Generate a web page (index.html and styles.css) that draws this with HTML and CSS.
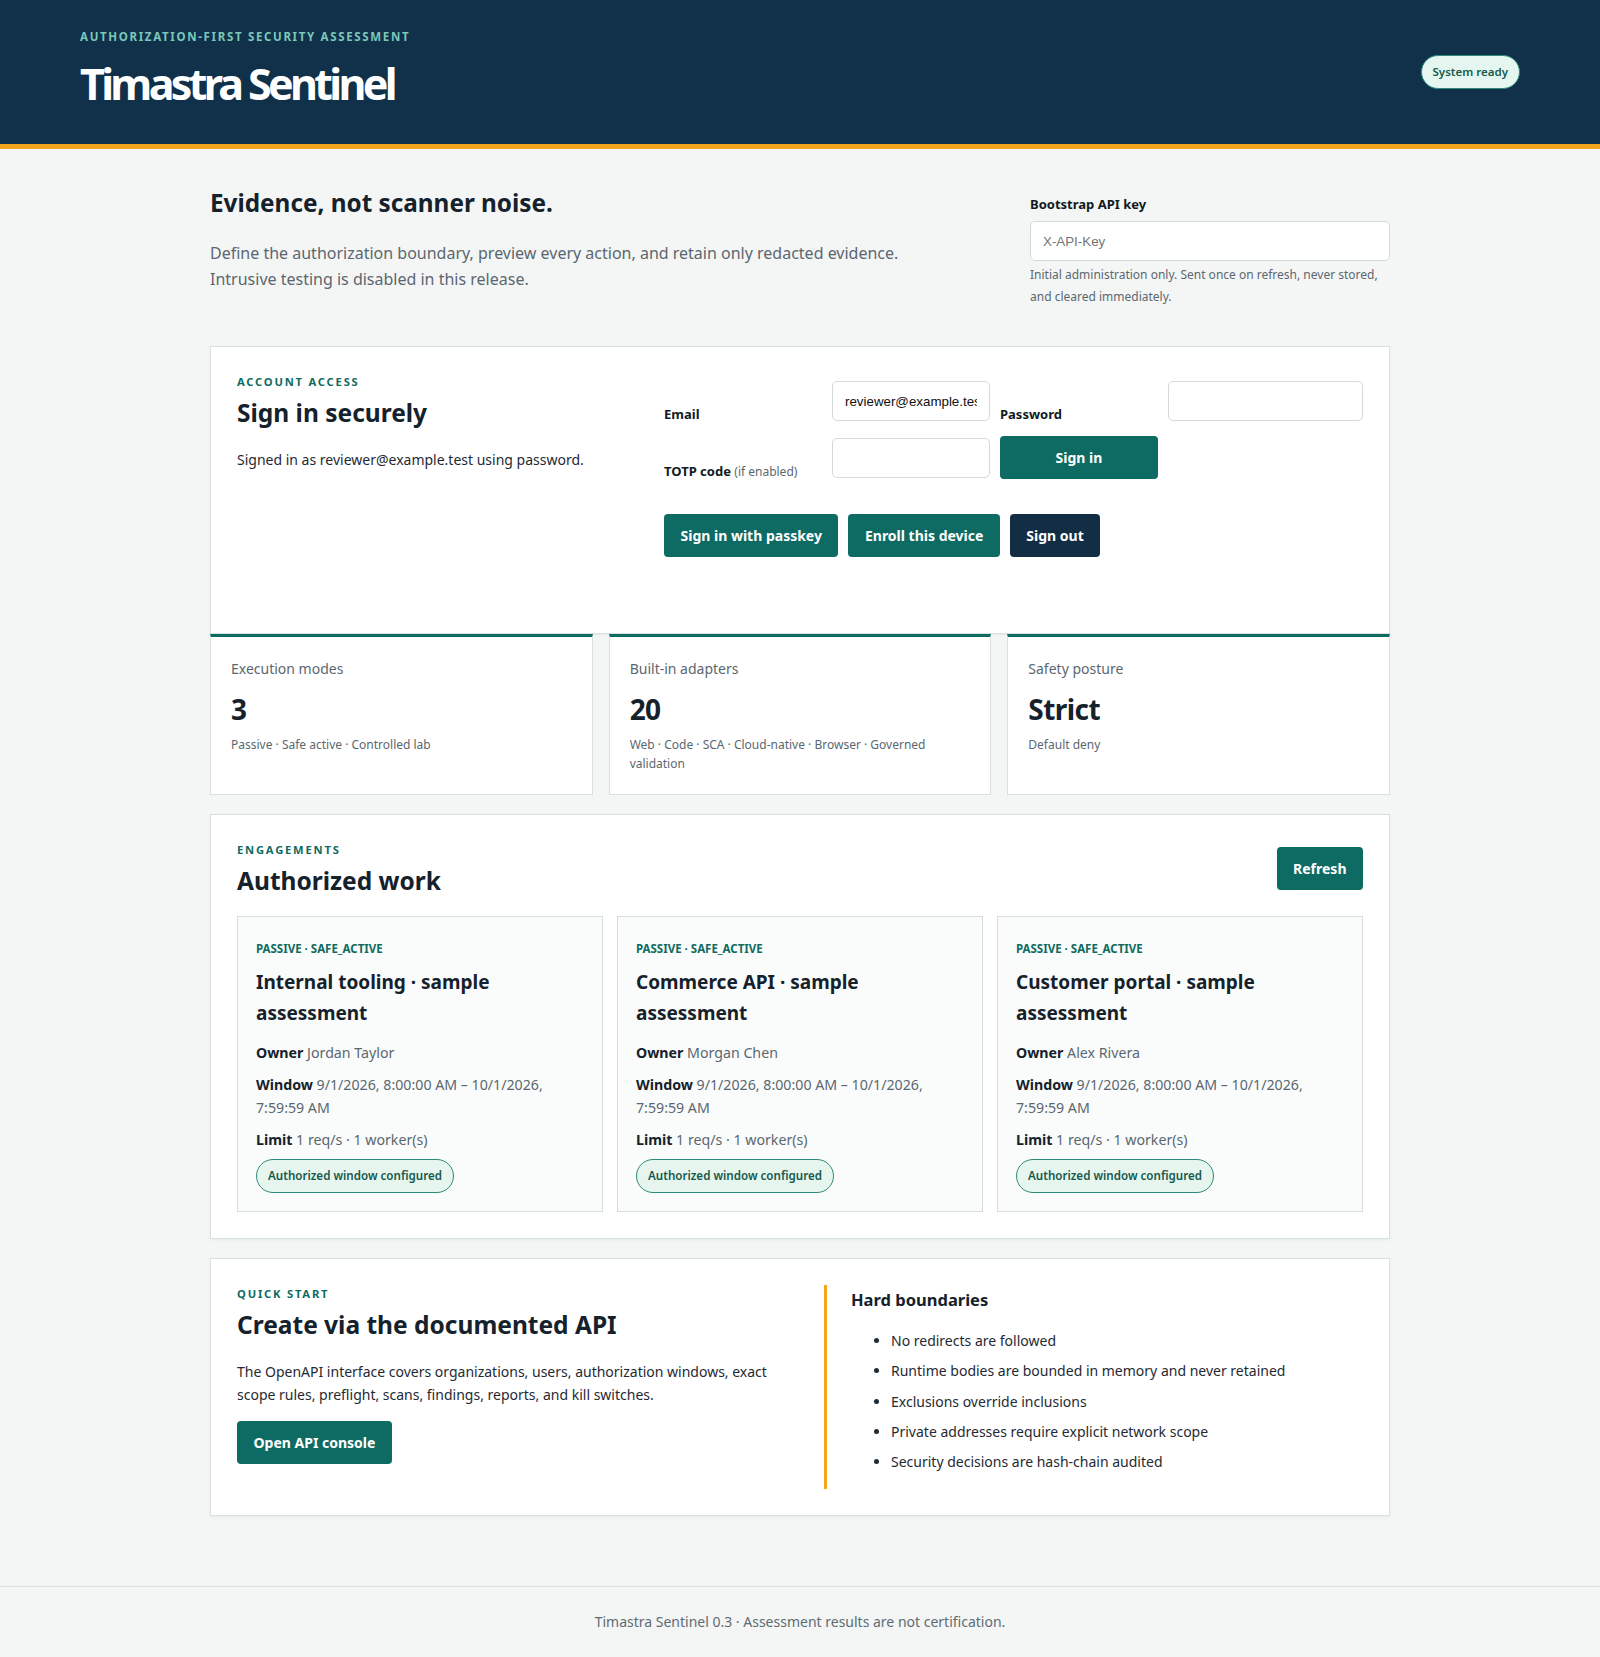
FILE: index.html
```html
<!DOCTYPE html>
<html lang="en">
<head>
<meta charset="utf-8">
<title>Timastra Sentinel</title>
<link rel="stylesheet" href="styles.css">
</head>
<body>
<header class="topbar">
  <div class="brand">
    <p class="brand-eyebrow">Authorization-first security assessment</p>
    <h1 class="brand-title">Timastra Sentinel</h1>
  </div>
  <span class="status-pill">System ready</span>
</header>

<main class="page">
  <section class="hero">
    <div class="hero-copy">
      <h2 class="hero-title">Evidence, not scanner noise.</h2>
      <p class="hero-text">Define the authorization boundary, preview every action, and retain only redacted evidence. Intrusive testing is disabled in this release.</p>
    </div>
    <div class="api-key">
      <label class="field-label" for="apikey">Bootstrap API key</label>
      <input class="text-input" id="apikey" type="text" placeholder="X-API-Key">
      <p class="help-text">Initial administration only. Sent once on refresh, never stored, and cleared immediately.</p>
    </div>
  </section>

  <section class="card account">
    <div class="account-intro">
      <p class="eyebrow">Account access</p>
      <h2 class="section-title">Sign in securely</h2>
      <p class="account-status">Signed in as reviewer@example.test using password.</p>
    </div>
    <div class="account-form">
      <div class="form-grid">
        <label class="form-label" for="email">Email</label>
        <input class="text-input" id="email" type="email" value="reviewer@example.test">
        <label class="form-label" for="password">Password</label>
        <input class="text-input" id="password" type="password">
        <label class="form-label" for="totp">TOTP code <span class="label-hint">(if enabled)</span></label>
        <input class="text-input" id="totp" type="text">
        <button class="btn btn-primary btn-block" type="button">Sign in</button>
      </div>
      <div class="btn-row">
        <button class="btn btn-primary" type="button">Sign in with passkey</button>
        <button class="btn btn-primary" type="button">Enroll this device</button>
        <button class="btn btn-dark" type="button">Sign out</button>
      </div>
    </div>
  </section>

  <section class="stats">
    <div class="stat">
      <p class="stat-label">Execution modes</p>
      <p class="stat-value">3</p>
      <p class="stat-note">Passive · Safe active · Controlled lab</p>
    </div>
    <div class="stat">
      <p class="stat-label">Built-in adapters</p>
      <p class="stat-value">20</p>
      <p class="stat-note">Web · Code · SCA · Cloud-native · Browser · Governed validation</p>
    </div>
    <div class="stat">
      <p class="stat-label">Safety posture</p>
      <p class="stat-value">Strict</p>
      <p class="stat-note">Default deny</p>
    </div>
  </section>

  <section class="card engagements">
    <div class="section-head">
      <div>
        <p class="eyebrow">Engagements</p>
        <h2 class="section-title">Authorized work</h2>
      </div>
      <button class="btn btn-primary" type="button">Refresh</button>
    </div>
    <div class="eng-grid">
      <article class="eng">
        <p class="eng-modes">PASSIVE · SAFE_ACTIVE</p>
        <h3 class="eng-title">Internal tooling · sample assessment</h3>
        <p class="eng-meta"><strong>Owner</strong> Jordan Taylor</p>
        <p class="eng-meta"><strong>Window</strong> 9/1/2026, 8:00:00 AM – 10/1/2026, 7:59:59 AM</p>
        <p class="eng-meta"><strong>Limit</strong> 1 req/s · 1 worker(s)</p>
        <span class="pill">Authorized window configured</span>
      </article>
      <article class="eng">
        <p class="eng-modes">PASSIVE · SAFE_ACTIVE</p>
        <h3 class="eng-title">Commerce API · sample assessment</h3>
        <p class="eng-meta"><strong>Owner</strong> Morgan Chen</p>
        <p class="eng-meta"><strong>Window</strong> 9/1/2026, 8:00:00 AM – 10/1/2026, 7:59:59 AM</p>
        <p class="eng-meta"><strong>Limit</strong> 1 req/s · 1 worker(s)</p>
        <span class="pill">Authorized window configured</span>
      </article>
      <article class="eng">
        <p class="eng-modes">PASSIVE · SAFE_ACTIVE</p>
        <h3 class="eng-title">Customer portal · sample assessment</h3>
        <p class="eng-meta"><strong>Owner</strong> Alex Rivera</p>
        <p class="eng-meta"><strong>Window</strong> 9/1/2026, 8:00:00 AM – 10/1/2026, 7:59:59 AM</p>
        <p class="eng-meta"><strong>Limit</strong> 1 req/s · 1 worker(s)</p>
        <span class="pill">Authorized window configured</span>
      </article>
    </div>
  </section>

  <section class="card quickstart">
    <div class="qs-main">
      <p class="eyebrow">Quick start</p>
      <h2 class="section-title">Create via the documented API</h2>
      <p class="qs-text">The OpenAPI interface covers organizations, users, authorization windows, exact scope rules, preflight, scans, findings, reports, and kill switches.</p>
      <button class="btn btn-primary" type="button">Open API console</button>
    </div>
    <aside class="boundaries">
      <h3 class="boundaries-title">Hard boundaries</h3>
      <ul class="boundaries-list">
        <li>No redirects are followed</li>
        <li>Runtime bodies are bounded in memory and never retained</li>
        <li>Exclusions override inclusions</li>
        <li>Private addresses require explicit network scope</li>
        <li>Security decisions are hash-chain audited</li>
      </ul>
    </aside>
  </section>
</main>

<footer class="footer">Timastra Sentinel 0.3 · Assessment results are not certification.</footer>
</body>
</html>
```
FILE: styles.css
```css
* {
  box-sizing: border-box;
}

body {
  margin: 0;
  font-family: "Noto Sans", "Open Sans", sans-serif;
  background: #f4f6f5;
  color: #1b2630;
}

p, h1, h2, h3 {
  margin: 0;
}

/* Header */
.topbar {
  height: 149px;
  padding: 0 80px;
  background: #11304a;
  border-bottom: 5px solid #f4a51c;
  display: flex;
  align-items: center;
  justify-content: space-between;
}

.brand {
  padding-bottom: 7px;
}

.brand-eyebrow {
  font-size: 11.5px;
  line-height: 16px;
  font-weight: 700;
  letter-spacing: 0.145em;
  text-transform: uppercase;
  color: #7cc8ba;
}

.brand-title {
  margin-top: 15px;
  font-size: 43px;
  line-height: 48px;
  font-weight: 700;
  letter-spacing: -0.085em;
  color: #ffffff;
}

.status-pill {
  display: inline-block;
  padding: 7px 11px;
  line-height: 18px;
  font-size: 11.5px;
  font-weight: 600;
  color: #17594d;
  background: #e4f6ef;
  border: 1px solid #2e8b79;
  border-radius: 999px;
}

/* Page */
.page {
  width: 1180px;
  margin: 0 auto;
  padding: 38px 0 70px;
}

.hero {
  display: grid;
  grid-template-columns: 1fr 360px;
  column-gap: 40px;
  margin-bottom: 38px;
}

.hero-title {
  font-size: 24.3px;
  line-height: 31px;
  font-weight: 700;
  color: #15212b;
}

.hero-text {
  margin-top: 22px;
  max-width: 710px;
  font-size: 16px;
  line-height: 26px;
  color: #5b6770;
}

.api-key {
  padding-top: 8px;
  display: flex;
  flex-direction: column;
}

.field-label {
  font-size: 13px;
  line-height: 18px;
  font-weight: 700;
  color: #111a22;
}

.text-input {
  width: 100%;
  height: 40px;
  padding: 0 12px;
  border: 1px solid #d3dbda;
  border-radius: 5px;
  background: #ffffff;
  font-family: "Liberation Sans", Arial, sans-serif;
  font-size: 13.33px;
  color: #111111;
}

.text-input::placeholder {
  color: #757575;
}

.api-key .text-input {
  margin-top: 8px;
}

.help-text {
  margin-top: 3px;
  font-size: 12px;
  line-height: 22px;
  color: #5b6770;
}

/* Cards */
.card {
  background: #ffffff;
  border: 1px solid #d9e1df;
  padding: 26px;
  box-shadow: 0 1px 3px rgba(17, 48, 74, 0.05);
}

.eyebrow {
  font-size: 11.2px;
  line-height: 18px;
  font-weight: 700;
  letter-spacing: 0.16em;
  text-transform: uppercase;
  color: #0f6b5f;
}

.section-title {
  margin-top: 6px;
  font-size: 24.5px;
  line-height: 31px;
  font-weight: 700;
  color: #15212b;
}

/* Account */
.account {
  display: grid;
  grid-template-columns: 1fr 699px;
  column-gap: 28px;
  padding-bottom: 76px;
}

.account-status {
  margin-top: 20px;
  font-size: 14px;
  line-height: 23px;
  color: #1f2a33;
}

.account-form {
  padding-top: 8px;
}

.form-grid {
  display: grid;
  grid-template-columns: 158px 158px 158px 195px;
  column-gap: 10px;
  row-gap: 15px;
  align-items: center;
}

.form-label {
  align-self: end;
  font-size: 13px;
  line-height: 14px;
  font-weight: 700;
  color: #111a22;
}

.label-hint {
  font-size: 12px;
  font-weight: 400;
  color: #5b6770;
}

.btn-row {
  margin-top: 35px;
  display: flex;
  gap: 10px;
}

.btn {
  padding: 10px 16.5px;
  border: 0;
  border-radius: 4px;
  font-family: "Noto Sans", "Open Sans", sans-serif;
  font-size: 14px;
  line-height: 23px;
  font-weight: 700;
  color: #ffffff;
  background: #0e6b63;
  white-space: nowrap;
}

.btn-dark {
  background: #132d44;
}

.btn-block {
  width: 100%;
}

/* Stats */
.stats {
  display: grid;
  grid-template-columns: repeat(3, 1fr);
  gap: 16px;
  margin-bottom: 19px;
}

.stat {
  background: #ffffff;
  border: 1px solid #d9e1df;
  border-top: 3px solid #0f6b60;
  padding: 22px 20px 21px;
}

.stat-label {
  font-size: 14px;
  line-height: 20px;
  color: #5b6770;
}

.stat-value {
  margin-top: 13px;
  font-size: 28px;
  line-height: 35px;
  font-weight: 700;
  letter-spacing: -0.02em;
  color: #15212b;
}

.stat-note {
  margin-top: 8px;
  font-size: 12px;
  line-height: 19px;
  color: #5b6770;
}

/* Engagements */
.engagements {
  margin-bottom: 19px;
}

.section-head {
  display: flex;
  align-items: center;
  justify-content: space-between;
  margin-bottom: 20px;
}

.eng-grid {
  display: grid;
  grid-template-columns: repeat(3, 1fr);
  gap: 14px;
}

.eng {
  display: flex;
  flex-direction: column;
  align-items: flex-start;
  background: #fafcfb;
  border: 1px solid #d5dedc;
  padding: 23px 18px 18px;
}

.eng-modes {
  font-size: 11.5px;
  line-height: 18px;
  font-weight: 700;
  color: #0f6b5f;
}

.eng-title {
  margin-top: 9px;
  max-width: 280px;
  font-size: 19px;
  line-height: 31px;
  font-weight: 700;
  color: #15212b;
}

.eng-title + .eng-meta {
  margin-top: 12px;
}

.eng-meta {
  margin-bottom: 8px;
  font-size: 14.2px;
  line-height: 23.5px;
  color: #5b6770;
}

.eng-meta strong {
  color: #15212b;
  font-weight: 700;
}

.pill {
  display: block;
  padding: 7px 11px;
  line-height: 18px;
  font-size: 11.6px;
  font-weight: 600;
  color: #17594d;
  background: #e6f6ef;
  border: 1px solid #2e8b79;
  border-radius: 999px;
}

/* Quick start */
.quickstart {
  display: grid;
  grid-template-columns: 1fr 539px;
  column-gap: 28px;
}

.qs-text {
  margin-top: 20px;
  font-size: 14px;
  line-height: 23px;
  color: #1f2a33;
}

.qs-main .btn {
  margin-top: 15px;
}

.boundaries {
  border-left: 3px solid #f4a51c;
  padding: 3px 0 0 24px;
}

.boundaries-title {
  font-size: 16.5px;
  line-height: 23px;
  font-weight: 700;
  color: #15212b;
}

.boundaries-list {
  margin: 19px 0 16px;
  padding-left: 40px;
  font-size: 14px;
  line-height: 22px;
  color: #1f2a33;
}

.boundaries-list li + li {
  margin-top: 8.25px;
}

/* Footer */
.footer {
  border-top: 1px solid #dde3e1;
  padding: 24px 0 25px;
  text-align: center;
  font-size: 14px;
  line-height: 22px;
  color: #5f6b73;
}
```
